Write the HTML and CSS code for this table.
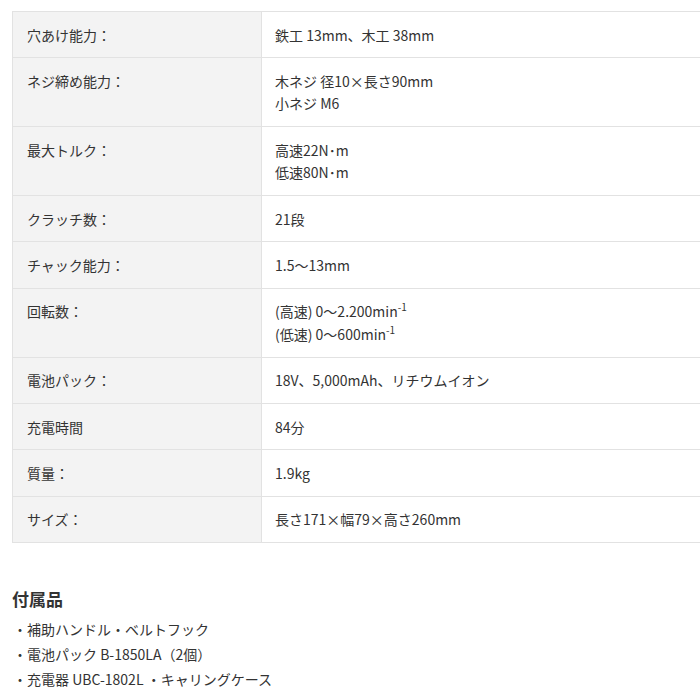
FILE: index.html
```html
<!DOCTYPE html>
<html lang="ja">
<head>
    <meta charset="UTF-8">
    <title>仕様</title>
    <link rel="stylesheet" href="styles.css">
</head>
<body>
    <div class="spec-wrap">
        <table class="spec-table">
            <tr><th>穴あけ能力：</th><td>鉄工 13mm、木工 38mm</td></tr>
            <tr><th>ネジ締め能力：</th><td>木ネジ 径10×長さ90mm<br>小ネジ M6</td></tr>
            <tr><th>最大トルク：</th><td>高速22N･m<br>低速80N･m</td></tr>
            <tr><th>クラッチ数：</th><td>21段</td></tr>
            <tr><th>チャック能力：</th><td>1.5～13mm</td></tr>
            <tr><th>回転数：</th><td>(高速) 0～2.200min<sup>-1</sup><br>(低速) 0～600min<sup>-1</sup></td></tr>
            <tr><th>電池パック：</th><td>18V、5,000mAh、リチウムイオン</td></tr>
            <tr><th>充電時間</th><td>84分</td></tr>
            <tr><th>質量：</th><td>1.9kg</td></tr>
            <tr><th>サイズ：</th><td>長さ171×幅79×高さ260mm</td></tr>
        </table>
    </div>

    <h3 class="acc-title">付属品</h3>
    <ul class="acc-list">
        <li>・補助ハンドル・ベルトフック</li>
        <li>・電池パック B-1850LA（2個）</li>
        <li>・充電器 UBC-1802L ・キャリングケース</li>
    </ul>
</body>
</html>
```

FILE: styles.css
```css
html, body { margin: 0; padding: 0; }
body {
    font-family: "Noto Sans CJK JP", "Noto Sans", sans-serif;
    color: #333;
    background-color: #fff;
    padding: 11px 0 0 12px;
}

/* スペック表（右端は画面外へ続く） */
.spec-wrap {
    width: 688px;
    overflow: hidden;
}
.spec-table {
    width: 700px;
    border-collapse: collapse;
    font-size: 14px;
    line-height: 22.4px;
}
.spec-table th,
.spec-table td {
    border: 1px solid #e2e2e2;
    padding: 11.5px 13px;
    text-align: left;
    vertical-align: top;
    font-weight: normal;
}
.spec-table th {
    width: 221px;
    padding-left: 14px;
    background-color: #f3f3f3;
}
.spec-table sup {
    font-size: 10px;
    line-height: 0;
    vertical-align: 6px;
}

/* 付属品 */
.acc-title {
    font-size: 17px;
    font-weight: bold;
    margin: 44px 0 6px;
    line-height: 24px;
}
.acc-list {
    list-style: none;
    margin: 0;
    padding: 0 0 0 1px;
    font-size: 14px;
    line-height: 25px;
}
```
